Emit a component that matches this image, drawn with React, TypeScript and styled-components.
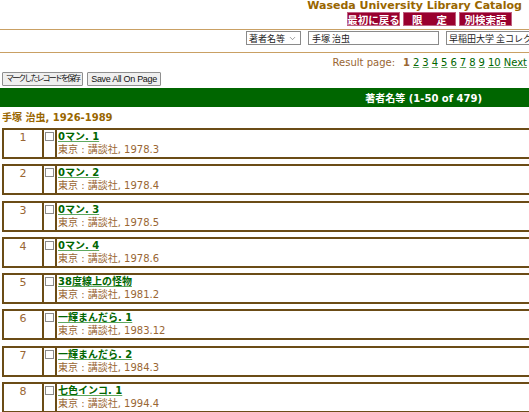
import React from 'react'
import styled, { createGlobalStyle } from 'styled-components'
import { ChevronDown } from 'lucide-react'

const GlobalStyle = createGlobalStyle`
    html, body {
        margin: 0;
        padding: 0;
        background: #ffffff;
        overflow: hidden;
    }
    body {
        font-family: "DejaVu Sans", "Noto Sans CJK JP", sans-serif;
        font-size: 11px;
    }
`;

const Page = styled.div`
    width: 529px;
    display: flex;
    flex-direction: column;
    overflow: hidden;
`;

const Header = styled.header`
    display: flex;
    flex-direction: column;
    align-items: flex-end;
    padding-right: 7px;
`;

const CatalogTitle = styled.h1`
    margin: 0;
    font-size: 11px;
    line-height: 12px;
    font-weight: bold;
    color: #996600;
    white-space: nowrap;
`;

const NavButtons = styled.div`
    display: flex;
    gap: 3px;
    margin-right: 10px;
`;

const NavButton = styled.a<{ $spread?: boolean }>`
    display: flex;
    align-items: center;
    justify-content: ${({ $spread }) => ($spread ? 'space-between' : 'center')};
    box-sizing: border-box;
    width: 53px;
    height: 14px;
    padding: 0 ${({ $spread }) => ($spread ? '8px' : '0')};
    background: #99002e;
    border: 1px solid #c06080;
    color: #ffffff;
    font-family: "Noto Sans CJK JP", sans-serif;
    font-weight: bold;
    font-size: 10.5px;
    white-space: nowrap;
`;

const Rule = styled.hr<{ $top: number }>`
    border: 0;
    border-top: 1px solid #c9a064;
    margin: ${({ $top }) => $top}px 0 0 0;
    width: 100%;
`;

const SearchRow = styled.form`
    display: flex;
    justify-content: flex-end;
    align-items: center;
    gap: 7px;
    margin: 1px -45px 0 0;
`;

const SelectBox = styled.div<{ $w: number }>`
    display: flex;
    align-items: center;
    justify-content: space-between;
    box-sizing: border-box;
    width: ${({ $w }) => $w}px;
    height: 14px;
    padding: 0 3px 0 2px;
    border: 1px solid #8a8a8a;
    background: #fff;
    color: #222;
    font-family: "Noto Sans CJK JP", sans-serif;
    font-size: 9px;
    white-space: nowrap;
    overflow: hidden;
    flex-shrink: 0;
`;

const SearchInput = styled.input`
    height: 14px;
    box-sizing: border-box;
    width: 131px;
    font-family: "Noto Sans CJK JP", sans-serif;
    font-size: 9px;
    border: 1px solid #8a8a8a;
    padding: 0 3px;
    color: #222;
    outline: none;
`;

const Pager = styled.nav`
    display: flex;
    justify-content: flex-end;
    align-items: baseline;
    gap: 3px;
    padding-right: 2px;
    margin-top: 3px;
    font-size: 10px;
    line-height: 13px;
    color: #996633;
`;

const PagerLabel = styled.span`
    margin-right: 5px;
`;

const CurrentPage = styled.b`
    color: #996633;
`;

const PageLink = styled.a`
    color: #006600;
    text-decoration: underline;
    text-decoration-color: #6aa86a;
`;

const ActionRow = styled.div`
    display: flex;
    gap: 4px;
    padding-left: 2px;
    margin-top: 3px;
`;

const ActionButton = styled.button<{ $cjk?: boolean }>`
    height: 14px;
    padding: 0 3px;
    background: #efefef;
    border: 1px solid #8f8f8f;
    border-radius: 1px;
    color: #111;
    font-family: "Liberation Sans", "Noto Sans CJK JP", sans-serif;
    font-size: ${({ $cjk }) => ($cjk ? '8px' : '9px')};
    letter-spacing: ${({ $cjk }) => ($cjk ? '-1.9px' : '-0.3px')};
    line-height: 12px;
    white-space: nowrap;
`;

const ResultBar = styled.div`
    margin-top: 2px;
    height: 19px;
    background: #006600;
    color: #ffffff;
    font-weight: bold;
    font-size: 10px;
    display: flex;
    align-items: center;
    justify-content: flex-end;
    padding-right: 47px;
`;

const AuthorHeading = styled.h2`
    margin: 4px 0 0 2px;
    font-size: 10px;
    line-height: 13px;
    font-weight: bold;
    color: #996600;
`;

const RecordList = styled.ol`
    list-style: none;
    margin: 4px 0 0 0;
    padding: 0 0 0 2px;
    display: flex;
    flex-direction: column;
    gap: 5.3px;
`;

const Record = styled.li`
    display: grid;
    grid-template-columns: 40px 13px 1fr;
    height: 31px;
    box-sizing: border-box;
    border: 2px solid #6b4c16;
    margin-right: -4px;
`;

const RecordNumber = styled.div`
    border-right: 2px solid #6b4c16;
    text-align: center;
    color: #996633;
    font-size: 11px;
    line-height: 13px;
    padding-top: 1px;
`;

const MarkCell = styled.div`
    border-right: 2px solid #6b4c16;
    display: flex;
    justify-content: center;
    padding-top: 2px;
`;

const MarkBox = styled.input`
    appearance: none;
    margin: 0;
    width: 9px;
    height: 9px;
    border: 1px solid #8a8a8a;
    background: #fff;
`;

const RecordBody = styled.div`
    display: flex;
    flex-direction: column;
    padding-left: 1px;
`;

const RecordTitle = styled.a`
    font-weight: bold;
    font-size: 10px;
    line-height: 13px;
    color: #006600;
    text-decoration: underline;
    text-decoration-color: #5fa85f;
    align-self: flex-start;
`;

const Imprint = styled.span`
    font-size: 10px;
    line-height: 14px;
    color: #996633;
`;

const records = [
    { title: '0マン. 1', date: '1978.3' },
    { title: '0マン. 2', date: '1978.4' },
    { title: '0マン. 3', date: '1978.5' },
    { title: '0マン. 4', date: '1978.6' },
    { title: '38度線上の怪物', date: '1981.2' },
    { title: '一輝まんだら. 1', date: '1983.12' },
    { title: '一輝まんだら. 2', date: '1984.3' },
    { title: '七色インコ. 1', date: '1994.4' },
]

const pages = ['2', '3', '4', '5', '6', '7', '8', '9', '10', 'Next']

export default function App() {
    return (
        <Page>
            <GlobalStyle />
            <Header>
                <CatalogTitle>Waseda University Library Catalog</CatalogTitle>
                <NavButtons>
                    <NavButton>最初に戻る</NavButton>
                    <NavButton $spread>
                        <span>限</span>
                        <span>定</span>
                    </NavButton>
                    <NavButton>別検索語</NavButton>
                </NavButtons>
            </Header>
            <Rule $top={3} />
            <SearchRow>
                <SelectBox $w={55}>
                    <span>著者名等</span>
                    <ChevronDown size={9} strokeWidth={1.5} color="#555" />
                </SelectBox>
                <SearchInput defaultValue="手塚 治虫" />
                <SelectBox $w={128}>
                    <span>早稲田大学 全コレクション</span>
                    <ChevronDown size={9} strokeWidth={1.5} color="#555" />
                </SelectBox>
            </SearchRow>
            <Rule $top={7} />
            <Pager>
                <PagerLabel>Result page:</PagerLabel>
                <CurrentPage>1</CurrentPage>
                {pages.map((p) => (
                    <PageLink key={p}>{p}</PageLink>
                ))}
            </Pager>
            <ActionRow>
                <ActionButton $cjk>マークしたレコードを保存</ActionButton>
                <ActionButton>Save All On Page</ActionButton>
            </ActionRow>
            <ResultBar>著者名等 (1-50 of 479)</ResultBar>
            <AuthorHeading>手塚 治虫, 1926-1989</AuthorHeading>
            <RecordList>
                {records.map((r, i) => (
                    <Record key={r.title}>
                        <RecordNumber>{i + 1}</RecordNumber>
                        <MarkCell>
                            <MarkBox type="checkbox" />
                        </MarkCell>
                        <RecordBody>
                            <RecordTitle>{r.title}</RecordTitle>
                            <Imprint>東京 : 講談社, {r.date}</Imprint>
                        </RecordBody>
                    </Record>
                ))}
            </RecordList>
        </Page>
    )
}
